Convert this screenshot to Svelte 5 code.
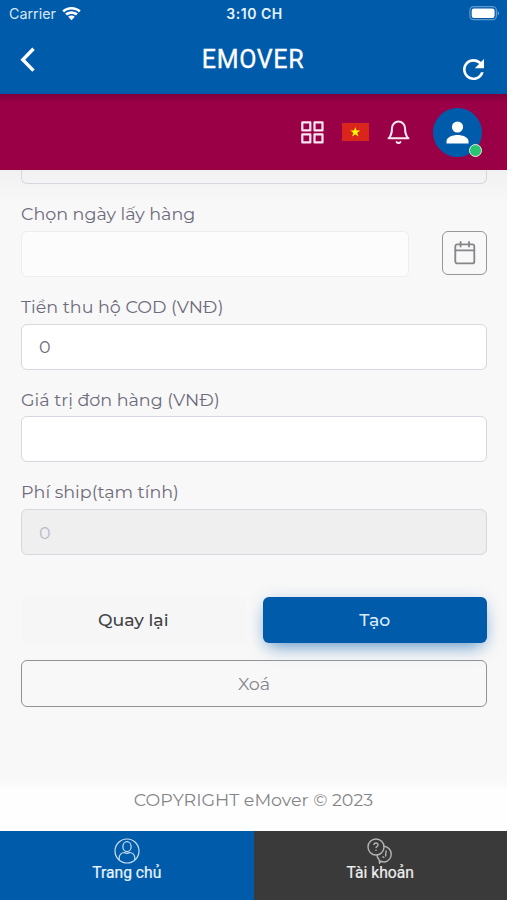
<script lang="ts">
    type Field = { id: string, label: string, value: string, disabled: boolean };

    const fields: Field[] = [
        { id: "cod", label: "Tiền thu hộ COD (VNĐ)", value: "0", disabled: false },
        { id: "price", label: "Giá trị đơn hàng (VNĐ)", value: "", disabled: false },
        { id: "ship", label: "Phí ship(tạm tính)", value: "0", disabled: true },
    ];

    let pickupDate = $state("");
</script>

<div class="screen">
    <header class="topbar">
        <div class="status">
            <div class="carrier">
                <span>Carrier</span>
                <svg width="19" height="14" viewBox="0 0 19 14" fill="#fff">
                    <path d="M9.5 0C5.9 0 2.7 1.3.3 3.5l1.8 1.9C4.1 3.6 6.7 2.6 9.5 2.6s5.4 1 7.4 2.8l1.8-1.9C16.3 1.3 13.1 0 9.5 0z" />
                    <path d="M9.5 4.3c-2.4 0-4.6.9-6.3 2.3L5 8.500c1.200-1 2.800-1.600 4.500-1.600s3.300.6 4.500 1.600l1.800-1.900c-1.700-1.400-3.900-2.300-6.300-2.300z" />
                    <path d="M9.500 8.600c-1.300 0-2.400.4-3.300 1.200l3.300 3.500 3.300-3.500c-.9-.8-2-1.200-3.300-1.200z" />
                </svg>
            </div>
            <span class="clock">3:10 CH</span>
            <svg class="battery" width="31" height="15" viewBox="0 0 31 15">
                <rect x=".9" y=".7" width="26.500" height="13" rx="3.700" fill="none" stroke="#5f98cc" stroke-width="1.200" />
                <rect x="2.700" y="2.500" width="22.900" height="9.400" rx="2.200" fill="#fff" />
                <path d="M28.700 5v4.400c1.700-.7 1.700-3.700 0-4.400z" fill="#7fadd6" />
            </svg>
        </div>
        <div class="titlebar">
            <button class="plain" aria-label="Back">
                <svg width="16" height="26" viewBox="0 0 16 26" fill="none" stroke="#fff" stroke-width="3.400">
                    <path d="M13.500 1.800 2.800 12.700l10.700 10.900" />
                </svg>
            </button>
            <h1>EMOVER</h1>
            <button class="plain reload" aria-label="Reload">
                <svg width="21" height="21" viewBox="4 4 16 16" fill="#fff">
                    <path d="M17.650 6.350C16.200 4.900 14.210 4 12 4c-4.420 0-7.990 3.580-7.990 8s3.570 8 7.990 8c3.730 0 6.840-2.550 7.730-6h-2.080c-.82 2.330-3.040 4-5.650 4-3.310 0-6-2.690-6-6s2.690-6 6-6c1.660 0 3.140.69 4.220 1.780L13 11h7V4l-2.350 2.350z" />
                </svg>
            </button>
        </div>
    </header>

    <nav class="toolbar">
        <svg class="grid" width="23" height="23" viewBox="0 0 23 23" fill="none" stroke="#fbe6f2" stroke-width="2.200" stroke-linejoin="round">
            <rect x="1.300" y="1.400" width="8" height="8" />
            <rect x="13.500" y="1.400" width="8" height="8" />
            <rect x="1.300" y="13.400" width="8" height="8" />
            <rect x="13.500" y="13.400" width="8" height="8" />
        </svg>
        <svg class="flag" width="27" height="18" viewBox="0 0 27 18">
            <rect width="27" height="18" fill="#da251d" />
            <path d="m13.300 4 1.200 3.600h3.800l-3.100 2.200 1.200 3.600-3.100-2.200-3.100 2.200 1.200-3.600-3.100-2.200h3.800z" fill="#ff0" />
        </svg>
        <svg class="bell" width="23" height="25" viewBox="0 0 23 25" fill="none" stroke="#fbe6f2" stroke-width="2" stroke-linecap="round" stroke-linejoin="round">
            <path d="M18 8.100a6.500 6.500 0 0 0-13 0c0 7.800-3.500 10.200-3.500 10.200h20S18 15.900 18 8.100" />
            <path d="M13.400 22a2.200 2.200 0 0 1-3.800 0" />
        </svg>
        <div class="avatar">
            <svg width="23" height="23" viewBox="0 0 23 23" fill="#fff">
                <circle cx="11.500" cy="6" r="5.600" />
                <path d="M.5 22.500v-2.200c0-4.300 6.500-6.300 11-6.300s11 2 11 6.300v2.200z" />
            </svg>
            <span class="online"></span>
        </div>
    </nav>

    <main>
        <div class="previous"></div>

        <label class="pickup" for="date">Chọn ngày lấy hàng</label>
        <div class="date-row">
            <input id="date" readonly bind:value={pickupDate} />
            <button class="calendar" aria-label="Calendar">
                <svg width="22" height="24" viewBox="0 0 22 24" fill="none" stroke="#85858a" stroke-width="1.800" stroke-linecap="round" stroke-linejoin="round">
                    <rect x="1.300" y="3.400" width="19" height="19" rx="2" />
                    <path d="M6.600 1v4.600M15 1v4.600M1.300 9.300h19" />
                </svg>
            </button>
        </div>

        {#each fields as field}
            <label for={field.id}>{field.label}</label>
            <input id={field.id} value={field.value} disabled={field.disabled} />
        {/each}

        <div class="actions">
            <button class="back">Quay lại</button>
            <button class="create">Tạo</button>
        </div>
        <button class="clear">Xoá</button>
    </main>

    <footer>COPYRIGHT eMover © 2023</footer>

    <div class="tabs">
        <a class="tab active" href="#home">
            <svg width="26" height="26" viewBox="0 0 26 26" fill="none" stroke="#c9def0" stroke-width="1.200">
                <circle cx="13" cy="13" r="12" />
                <ellipse cx="13" cy="8.700" rx="4.100" ry="5" />
                <path d="M5.200 22v-2.300c0-3.300 2.700-5.200 5.300-5.200 1.500 1 3.500 1 5 0 2.600 0 5.300 1.900 5.300 5.200V22" />
            </svg>
            <span>Trang chủ</span>
        </a>
        <a class="tab" href="#account">
            <svg width="26" height="26" viewBox="0 0 26 26" fill="none" stroke="#b4b4b4" stroke-width="1.400">
                <circle cx="9" cy="9" r="8" />
                <path d="M17.200 8.200a8 8 0 0 1 .5 15.800c-1.500.1-2.900-.3-4-.9L12.600 25l-.5-3.500c-1.500-1.500-2.200-3.300-2.100-4.500" />
                <path d="M6.900 7c.1-2.700 4.300-2.600 4.100 0-.1 1.400-2 1.500-2 3M9 11.400v1.300M19.200 12.500l-.7 6M15.500 18.500l1.700 1.300" />
            </svg>
            <span>Tài khoản</span>
        </a>
    </div>
</div>

<style>

:global(body) {
    margin: 0;
    overflow: hidden;
}

.screen {
    display: flex;
    flex-direction: column;
    width: 507px;
    height: 900px;
    background-color: #f8f8f8;
    font-family: Montserrat, Inter, "Noto Sans", sans-serif;
    font-size: 17.5px;
    color: #6e6b7b;
    overflow: hidden;
}

button,
input {
    box-sizing: border-box;
    font: inherit;
}

svg {
    display: block;
    flex: none;
}

.topbar {
    flex: none;
    height: 94px;
    background-color: #005baa;
    color: #fff;
}

.status {
    display: grid;
    grid-template-columns: 1fr auto 1fr;
    align-items: center;
    height: 27px;
    padding: 0 7px 0 9px;
    font-family: Inter, sans-serif;
    font-size: 14.3px;
}

.carrier {
    display: flex;
    align-items: center;
    gap: 6px;
    color: #d5e7f6;
}

.clock {
    font-weight: 600;
    font-size: 14px;
    letter-spacing: 0.5px;
    color: #e6f2fc;
}

.battery {
    justify-self: end;
}

.titlebar {
    display: grid;
    grid-template-columns: 1fr auto 1fr;
    align-items: center;
    height: 65px;
    padding: 0 21px 0 20px;
}

.plain {
    padding: 0;
    border: none;
    background: none;
    justify-self: start;
}

.reload {
    justify-self: end;
    padding: 20px 2px 0 0;
}

h1 {
    margin: 0;
    font-family: Roboto, sans-serif;
    font-weight: 400;
    font-size: 25px;
    letter-spacing: 0.65px;
    color: #fff;
    -webkit-text-stroke: 0.3px #fff;
}

.toolbar {
    display: flex;
    flex: none;
    align-items: center;
    justify-content: flex-end;
    box-sizing: border-box;
    height: 76px;
    padding-right: 25px;
    background: linear-gradient(#7d003b, #990046 8px);
}

.flag {
    margin-left: 18px;
}

.bell {
    margin-left: 18px;
}

.avatar {
    display: flex;
    align-items: center;
    justify-content: center;
    position: relative;
    width: 49px;
    height: 49px;
    margin-left: 23px;
    border-radius: 50%;
    background-color: #005baa;
}

.online {
    position: absolute;
    right: 0;
    bottom: 0;
    width: 11px;
    height: 11px;
    border: 1.5px solid #f0e8ec;
    border-radius: 50%;
    background-color: #28c76f;
}

main {
    flex: none;
    box-sizing: border-box;
    height: 610px;
    padding: 0 20px 0 21px;
    background: linear-gradient(#f1f1f1, #f8f8f8 34px);
}

.previous {
    box-sizing: border-box;
    height: 14px;
    border: 1px solid #d8d6de;
    border-top: none;
    border-radius: 0 0 6px 6px;
}

label {
    display: block;
    height: 26.8px;
    padding-top: 20px;
    line-height: 20px;
    white-space: nowrap;
}

input {
    display: block;
    width: 100%;
    height: 46px;
    padding: 0 17px;
    border: 1px solid #d8d6de;
    border-radius: 6px;
    background-color: #fff;
    color: #6e6b7b;
    outline: none;
}

input:disabled {
    background-color: #efefef;
    color: #b9b9c8;
}

.date-row {
    display: flex;
    justify-content: space-between;
    height: 46px;
}

.date-row input {
    width: 388px;
    border-color: #ededee;
    background-color: #fcfcfc;
}

.calendar {
    display: flex;
    align-items: center;
    justify-content: center;
    width: 45px;
    height: 44px;
    padding: 0;
    border: 1px solid #96969b;
    border-radius: 6px;
    background: none;
}

.actions {
    display: flex;
    gap: 17px;
    margin-top: 42px;
}

.actions button {
    flex: 1;
    height: 46px;
    padding: 0 0 2px;
    border: none;
    border-radius: 6px;
    font-size: 17.3px;
    font-weight: 500;
}

.back {
    background-color: #f6f6f6;
    color: #424245;
}

.create {
    background-color: #005baa;
    color: #d9ebfb;
    box-shadow: 0 8px 18px -5px rgba(0, 91, 170, 0.6), 0 0 16px rgba(0, 91, 170, 0.1);
}

.clear {
    width: 100%;
    height: 47px;
    margin-top: 17px;
    border: 1px solid #929297;
    border-radius: 6px;
    background: none;
    color: #858589;
}

footer {
    flex: none;
    box-sizing: border-box;
    height: 51px;
    padding-top: 10px;
    background: linear-gradient(#f8f8f8, #fefefe 10px);
    line-height: 20px;
    text-align: center;
    color: #858589;
}

.tabs {
    display: flex;
    flex: none;
    height: 69px;
}

.tab {
    display: flex;
    flex: 1;
    flex-direction: column;
    align-items: center;
    box-sizing: border-box;
    padding-top: 7px;
    background-color: #3a3a3a;
    font-family: Roboto, sans-serif;
    font-size: 15.7px;
    line-height: 17px;
    color: #eee;
    text-decoration: none;
}

.tab span {
    -webkit-text-stroke: 0.2px currentColor;
}

.active {
    background-color: #005baa;
    color: #e8f4ff;
}

</style>
